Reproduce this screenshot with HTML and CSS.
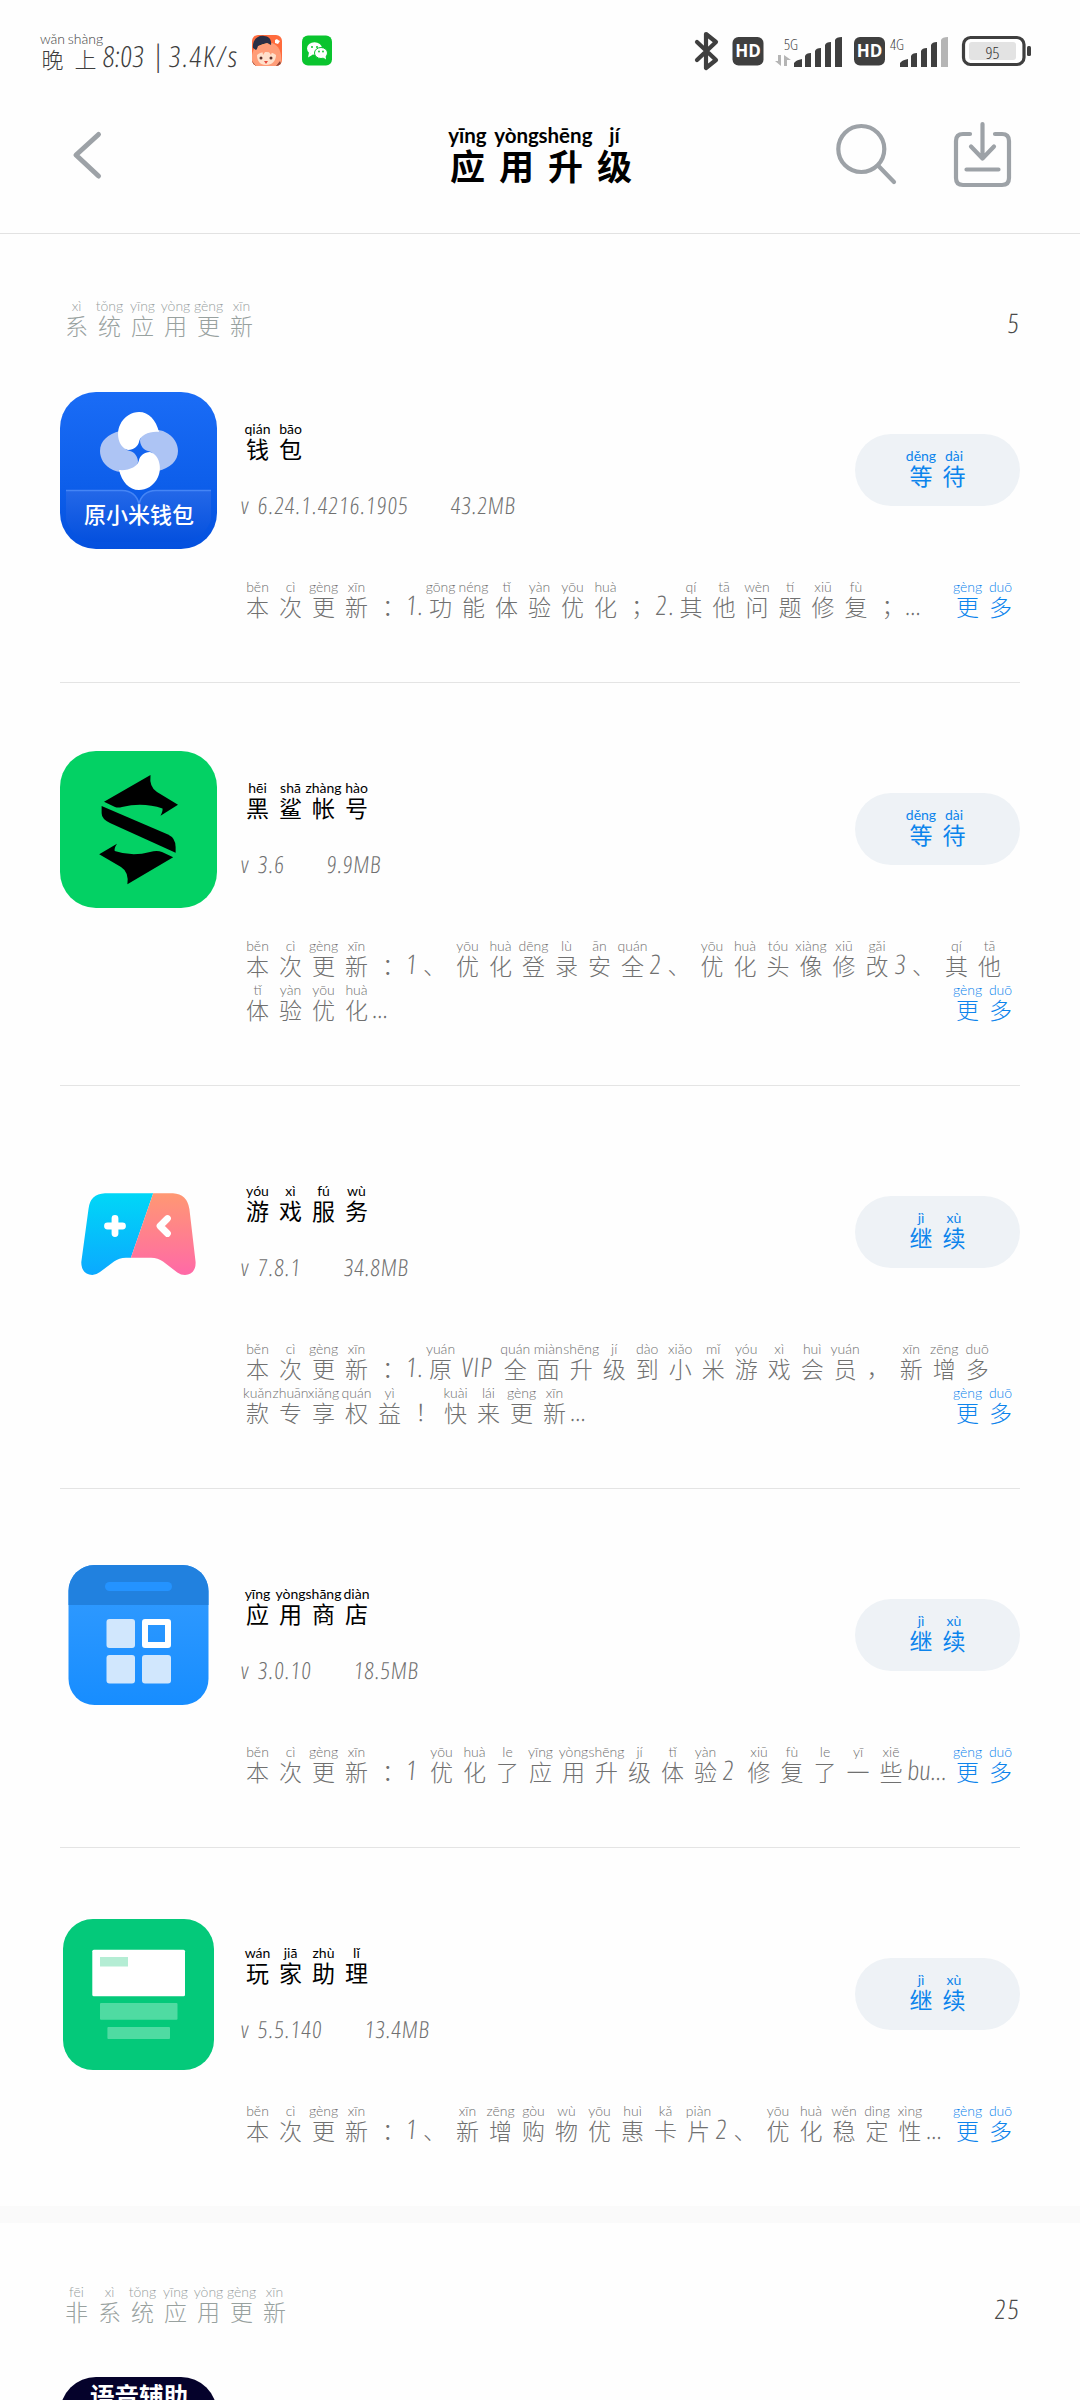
FILE: index.html
```html
<!DOCTYPE html>
<html lang="zh-CN">
<head>
<meta charset="utf-8">
<title>应用升级</title>
<link rel="stylesheet" href="styles.css">
</head>
<body>
<div class="status">
  <div class="clock"><ruby>晚<rt>wǎn</rt></ruby><ruby>上<rt>shàng</rt></ruby><span class="time">8:03</span><span class="bar">|</span><span class="speed">3.4K/s</span></div>
  <svg class="mini pet" viewBox="0 0 30 31">
    <defs><clipPath id="petclip"><rect width="30" height="31" rx="6"/></clipPath></defs>
    <g clip-path="url(#petclip)">
      <rect width="30" height="31" fill="#ff6b3d"/>
      <path d="M0 31V20C1 12 8 7 15 7s13 5 14 13l1 11z" fill="#ff9d78"/>
      <path d="M1 13C0 5 6 0 12 1c5 0 8 4 7 9-6-1-11 0-15 5z" fill="#2b2f45"/>
      <path d="M7 11c3-2 7-3 10-2l-1 2c-3-1-6 0-8 2z" fill="#ffb04a"/>
      <path d="M5 20c2-2 5-3 9-3s8 1 10 3c0 6-4 10-10 10S5 26 5 20z" fill="#ffe0cb"/>
      <path d="M3 20l7-7 1 7 4-6 4 6 2-6 5 7-1-8-10-5-9 3z" fill="#ff9d78"/>
      <circle cx="9" cy="23" r="1.5" fill="#5b2f2a"/><circle cx="19" cy="23" r="1.5" fill="#5b2f2a"/>
      <path d="M12 26h4l-2 3z" fill="#e64a3c"/>
      <path d="M23 5l2-1 1 1 2 1-2 3-3-1z" fill="#fff"/>
      <path d="M0 31v-5l4 5zM24 31l4-5 2 5z" fill="#8c4336"/>
    </g>
  </svg>
  <svg class="mini" viewBox="0 0 30 30">
    <rect width="30" height="30" rx="6" fill="#0ac42e"/>
    <ellipse cx="12.500" cy="13" rx="7.500" ry="6.200" fill="#fff"/><path d="M7 17l-1 5 5-3z" fill="#fff"/>
    <ellipse cx="19" cy="17.500" rx="6.500" ry="5.500" fill="#fff" stroke="#0ac42e"/><path d="M20 21l4 3-.5-4z" fill="#fff"/>
    <g fill="#0ac42e"><circle cx="10" cy="11.500" r="1"/><circle cx="15" cy="11.500" r="1"/><circle cx="17" cy="16" r=".9"/><circle cx="21" cy="16" r=".9"/></g>
  </svg>
  <svg class="signals" viewBox="690 30 345 42">
    <path d="M697 42l19 18-10 8V34l10 8-19 18" fill="none" stroke="#3f3f3f" stroke-width="4.200" stroke-linejoin="round" stroke-linecap="round"/>
    <g fill="#3f3f3f">
      <rect x="732.500" y="37" width="31" height="28.500" rx="6"/><rect x="854" y="37" width="31" height="28.500" rx="6"/>
      <path d="M794 67v-4q2-3 8-4v8zM805 67V56q1-3 6-3v14zM815 67V51q1-3 6-3v19zM825 67V45q1-3 6-3v25zM835 67V40q1-3 7-3v30z"/>
      <path d="M900 67v-4q2-3 8-4v8zM911 67V56q1-3 6-3v14zM921 67V51q1-3 6-3v19zM931 67V45q1-3 6-3v25z"/>
      <rect x="1027" y="46" width="4" height="10" rx="1.500"/>
    </g>
    <path d="M941 67V40q1-3 7-3v30z" fill="#b5b5b5"/>
    <path d="M781 55v11l-6-5h3v-6zM784 66V55l7 5h-4v6z" fill="#b5b5b5"/>
    <g class="hd"><text x="748" y="57">HD</text><text x="869.500" y="57">HD</text></g>
    <g class="net"><text x="784" y="49.500">5G</text><text x="890" y="49.500">4G</text></g>
    <rect x="963.500" y="37.500" width="60.500" height="27" rx="7" fill="#fff" stroke="#3f3f3f" stroke-width="3.200"/>
    <rect x="969" y="42" width="47" height="18" rx="3" fill="#e3e3e3"/>
    <text class="level" x="992.500" y="59">95</text>
  </svg>
</div>

<header class="bar-top">
  <svg class="back" viewBox="0 0 32 50"><path d="M27.500 4.500L5 25l22.500 21" /></svg>
  <h1><ruby>应<rt>yīng</rt></ruby><ruby>用<rt>yòng</rt></ruby><ruby>升<rt>shēng</rt></ruby><ruby>级<rt>jí</rt></ruby></h1>
  <div class="tools">
    <svg width="64" height="68" viewBox="834 121 64 68"><circle cx="861.300" cy="149" r="23"/><path d="M878.500 166L894 182"/></svg>
    <svg width="60" height="68" viewBox="952 121 60 68"><path d="M970 134h-7q-7 0-7 7v37q0 7 7 7h39q7 0 7-7v-37q0-7-7-7h-7M982.500 124v34M971 146.500l11.500 12 11.500-12M966.500 169.500h32"/></svg>
  </div>
</header>

<section class="group">
  <div class="group-head">
    <h2><ruby>系<rt>xì</rt></ruby><ruby>统<rt>tǒng</rt></ruby><ruby>应<rt>yīng</rt></ruby><ruby>用<rt>yòng</rt></ruby><ruby>更<rt>gèng</rt></ruby><ruby>新<rt>xīn</rt></ruby></h2>
    <span class="count">5</span>
  </div>

  <article class="app">
    <svg class="icon" viewBox="0 0 157 157">
      <defs>
        <linearGradient id="wallet" x2="0" y2="1"><stop stop-color="#1a6cf6"/><stop offset=".6" stop-color="#0d5eea"/><stop offset="1" stop-color="#0450de"/></linearGradient>
        <linearGradient id="flap" x2="0" y2="1"><stop stop-color="#2468e8"/><stop offset="1" stop-color="#0450de"/></linearGradient>
        <path id="petal" d="M68 58C58 55 56 41 60 33C64 24 72 20 79 20C89 20 96 28 99 40C90 39 80 43 79 50C78 54 74 58 68 58Z"/>
      </defs>
      <rect width="157" height="157" rx="36" fill="url(#wallet)"/>
      <path d="M6 98H62Q76 99 79 112Q82 99 96 98H151V128Q144 147 122 150H35Q13 147 6 128Z" fill="url(#flap)"/>
      <path d="M6 98.500H62Q76 99 79 112Q82 99 96 98.500H151" fill="none" stroke="#4585f5" stroke-width="1.500"/>
      <use href="#petal" transform="rotate(90 79 59)" fill="#adc4f4"/><use href="#petal" transform="rotate(-90 79 59)" fill="#adc4f4"/>
      <use href="#petal" fill="#fff"/><use href="#petal" transform="rotate(180 79 59)" fill="#fff"/>
      <text class="icon-text" x="79" y="131">原小米钱包</text>
    </svg>
    <div class="info">
      <h3><ruby>钱<rt>qián</rt></ruby><ruby>包<rt>bāo</rt></ruby></h3>
      <p class="meta"><span>v</span><span>6.24.1.4216.1905</span><span class="size">43.2MB</span></p>
    </div>
    <button><ruby>等<rt>děng</rt></ruby><ruby>待<rt>dài</rt></ruby></button>
    <div class="notes">
      <p><ruby>本<rt>běn</rt></ruby><ruby>次<rt>cì</rt></ruby><ruby>更<rt>gèng</rt></ruby><ruby>新<rt>xīn</rt></ruby><b class="mid">：</b><i class="one">1</i><i class="dot">.</i><ruby>功<rt>gōng</rt></ruby><ruby>能<rt>néng</rt></ruby><ruby>体<rt>tǐ</rt></ruby><ruby>验<rt>yàn</rt></ruby><ruby>优<rt>yōu</rt></ruby><ruby>化<rt>huà</rt></ruby><b class="mid">；</b><i>2</i><i class="dot">.</i><ruby>其<rt>qí</rt></ruby><ruby>他<rt>tā</rt></ruby><ruby>问<rt>wèn</rt></ruby><ruby>题<rt>tí</rt></ruby><ruby>修<rt>xiū</rt></ruby><ruby>复<rt>fù</rt></ruby><b class="mid">；</b><em>...</em></p>
      <a class="more"><ruby>更<rt>gèng</rt></ruby><ruby>多<rt>duō</rt></ruby></a>
    </div>
  </article>

  <article class="app">
    <svg class="icon" viewBox="0 0 157 157">
      <rect width="157" height="157" rx="36" fill="#03d164"/>
      <path d="M90.500 24L44 50.700L55 56Q58 57.200 62 56Q83 51 102.500 57.500Q103 60 100.500 64.700L118 53.700L97 41Q89 36 90.500 24Z"/>
      <path d="M41.600 55L108 83.500Q115.600 87 115.600 96V101.700L50 72Q41.600 68 41.600 62Z"/>
      <path d="M39.200 103.300L57 92.700Q54 97 54.700 100Q72 106 90 101Q97 99 102 101L113.200 106.300L67.400 133.300Q69 121 61 116Z"/>
    </svg>
    <div class="info">
      <h3><ruby>黑<rt>hēi</rt></ruby><ruby>鲨<rt>shā</rt></ruby><ruby>帐<rt>zhàng</rt></ruby><ruby>号<rt>hào</rt></ruby></h3>
      <p class="meta"><span>v</span><span>3.6</span><span class="size">9.9MB</span></p>
    </div>
    <button><ruby>等<rt>děng</rt></ruby><ruby>待<rt>dài</rt></ruby></button>
    <div class="notes">
      <p><ruby>本<rt>běn</rt></ruby><ruby>次<rt>cì</rt></ruby><ruby>更<rt>gèng</rt></ruby><ruby>新<rt>xīn</rt></ruby><b class="mid">：</b><i class="one">1</i><b>、</b><ruby>优<rt>yōu</rt></ruby><ruby>化<rt>huà</rt></ruby><ruby>登<rt>dēng</rt></ruby><ruby>录<rt>lù</rt></ruby><ruby>安<rt>ān</rt></ruby><ruby>全<rt>quán</rt></ruby><i>2</i><b>、</b><ruby>优<rt>yōu</rt></ruby><ruby>化<rt>huà</rt></ruby><ruby>头<rt>tóu</rt></ruby><ruby>像<rt>xiàng</rt></ruby><ruby>修<rt>xiū</rt></ruby><ruby>改<rt>gǎi</rt></ruby><i>3</i><b>、</b><ruby>其<rt>qí</rt></ruby><ruby>他<rt>tā</rt></ruby></p>
      <p><ruby>体<rt>tǐ</rt></ruby><ruby>验<rt>yàn</rt></ruby><ruby>优<rt>yōu</rt></ruby><ruby>化<rt>huà</rt></ruby><em>...</em></p>
      <a class="more"><ruby>更<rt>gèng</rt></ruby><ruby>多<rt>duō</rt></ruby></a>
    </div>
  </article>

  <article class="app">
    <svg class="icon" viewBox="0 0 157 157">
      <defs>
        <linearGradient id="cyan" x2="0" y2="1"><stop stop-color="#00d7f7"/><stop offset="1" stop-color="#0ba9ff"/></linearGradient>
        <linearGradient id="pink" x2="0" y2="1"><stop stop-color="#ff9873"/><stop offset="1" stop-color="#ff69a7"/></linearGradient>
      </defs>
      <path d="M93.200 39.300H45Q30 40 28.500 55L21.300 108Q21 120 32.300 121Q36 121 40 118L54 107.500Q59 103.700 66 103.700H70.900Z" fill="url(#cyan)"/>
      <path d="M93.200 39.300H113Q127 40 129.400 55L135.600 108Q136 120 125 121Q121 121 117.300 118.500L103 107.500Q98 103.700 91 103.700H70.900Z" fill="url(#pink)"/>
      <path d="M55 64.500v15M47.500 72h15M107.500 64.500L100 72l7.500 7.500" fill="none" stroke="#fff" stroke-width="6.800" stroke-linecap="round" stroke-linejoin="round"/>
    </svg>
    <div class="info">
      <h3><ruby>游<rt>yóu</rt></ruby><ruby>戏<rt>xì</rt></ruby><ruby>服<rt>fú</rt></ruby><ruby>务<rt>wù</rt></ruby></h3>
      <p class="meta"><span>v</span><span>7.8.1</span><span class="size">34.8MB</span></p>
    </div>
    <button><ruby>继<rt>jì</rt></ruby><ruby>续<rt>xù</rt></ruby></button>
    <div class="notes">
      <p><ruby>本<rt>běn</rt></ruby><ruby>次<rt>cì</rt></ruby><ruby>更<rt>gèng</rt></ruby><ruby>新<rt>xīn</rt></ruby><b class="mid">：</b><i class="one">1</i><i class="dot">.</i><ruby>原<rt>yuán</rt></ruby><i class="word">VIP</i><ruby>全<rt>quán</rt></ruby><ruby>面<rt>miàn</rt></ruby><ruby>升<rt>shēng</rt></ruby><ruby>级<rt>jí</rt></ruby><ruby>到<rt>dào</rt></ruby><ruby>小<rt>xiǎo</rt></ruby><ruby>米<rt>mǐ</rt></ruby><ruby>游<rt>yóu</rt></ruby><ruby>戏<rt>xì</rt></ruby><ruby>会<rt>huì</rt></ruby><ruby>员<rt>yuán</rt></ruby><b>，</b><ruby>新<rt>xīn</rt></ruby><ruby>增<rt>zēng</rt></ruby><ruby>多<rt>duō</rt></ruby></p>
      <p><ruby>款<rt>kuǎn</rt></ruby><ruby>专<rt>zhuān</rt></ruby><ruby>享<rt>xiǎng</rt></ruby><ruby>权<rt>quán</rt></ruby><ruby>益<rt>yì</rt></ruby><b class="mid">！</b><ruby>快<rt>kuài</rt></ruby><ruby>来<rt>lái</rt></ruby><ruby>更<rt>gèng</rt></ruby><ruby>新<rt>xīn</rt></ruby><em>...</em></p>
      <a class="more"><ruby>更<rt>gèng</rt></ruby><ruby>多<rt>duō</rt></ruby></a>
    </div>
  </article>

  <article class="app">
    <svg class="icon" viewBox="0 0 157 157">
      <defs>
        <linearGradient id="store" x2="0" y2="1"><stop offset=".25" stop-color="#2e99ff"/><stop offset="1" stop-color="#158cff"/></linearGradient>
        <clipPath id="storeclip"><rect x="8.500" y="8" width="140" height="140" rx="26"/></clipPath>
      </defs>
      <g clip-path="url(#storeclip)"><rect width="157" height="157" fill="url(#store)"/><rect width="157" height="48" fill="#2181df"/></g>
      <rect x="45" y="25" width="67" height="9" rx="4.500" fill="#2493ff"/>
      <g fill="#d1e7fd"><rect x="46.500" y="62" width="28.500" height="29" rx="3"/><rect x="46.500" y="98" width="28.500" height="28.500" rx="3"/><rect x="82" y="98" width="29" height="28.500" rx="3"/></g>
      <rect x="85" y="65" width="23" height="23" fill="none" stroke="#fff" stroke-width="6" stroke-linejoin="round"/>
    </svg>
    <div class="info">
      <h3><ruby>应<rt>yīng</rt></ruby><ruby>用<rt>yòng</rt></ruby><ruby>商<rt>shāng</rt></ruby><ruby>店<rt>diàn</rt></ruby></h3>
      <p class="meta"><span>v</span><span>3.0.10</span><span class="size">18.5MB</span></p>
    </div>
    <button><ruby>继<rt>jì</rt></ruby><ruby>续<rt>xù</rt></ruby></button>
    <div class="notes">
      <p><ruby>本<rt>běn</rt></ruby><ruby>次<rt>cì</rt></ruby><ruby>更<rt>gèng</rt></ruby><ruby>新<rt>xīn</rt></ruby><b class="mid">：</b><i class="one gap">1</i><ruby>优<rt>yōu</rt></ruby><ruby>化<rt>huà</rt></ruby><ruby>了<rt>le</rt></ruby><ruby>应<rt>yīng</rt></ruby><ruby>用<rt>yòng</rt></ruby><ruby>升<rt>shēng</rt></ruby><ruby>级<rt>jí</rt></ruby><ruby>体<rt>tǐ</rt></ruby><ruby>验<rt>yàn</rt></ruby><i class="gap">2</i><ruby>修<rt>xiū</rt></ruby><ruby>复<rt>fù</rt></ruby><ruby>了<rt>le</rt></ruby><ruby>一<rt>yī</rt></ruby><ruby>些<rt>xiē</rt></ruby><em>bu...</em></p>
      <a class="more"><ruby>更<rt>gèng</rt></ruby><ruby>多<rt>duō</rt></ruby></a>
    </div>
  </article>

  <article class="app">
    <svg class="icon" viewBox="0 0 157 157">
      <rect x="3" y="3" width="151" height="151" rx="30" fill="#04c97a"/>
      <rect x="32.300" y="33.700" width="92.700" height="46.500" rx="1.500" fill="#fff"/>
      <rect x="40" y="41" width="28" height="9.500" fill="#b4edd4"/>
      <g fill="#4fdba2"><rect x="40" y="87" width="77.500" height="16.800" rx="1"/><rect x="47.400" y="111" width="62.600" height="12" rx="1"/></g>
    </svg>
    <div class="info">
      <h3><ruby>玩<rt>wán</rt></ruby><ruby>家<rt>jiā</rt></ruby><ruby>助<rt>zhù</rt></ruby><ruby>理<rt>lǐ</rt></ruby></h3>
      <p class="meta"><span>v</span><span>5.5.140</span><span class="size">13.4MB</span></p>
    </div>
    <button><ruby>继<rt>jì</rt></ruby><ruby>续<rt>xù</rt></ruby></button>
    <div class="notes">
      <p><ruby>本<rt>běn</rt></ruby><ruby>次<rt>cì</rt></ruby><ruby>更<rt>gèng</rt></ruby><ruby>新<rt>xīn</rt></ruby><b class="mid">：</b><i class="one">1</i><b>、</b><ruby>新<rt>xīn</rt></ruby><ruby>增<rt>zēng</rt></ruby><ruby>购<rt>gòu</rt></ruby><ruby>物<rt>wù</rt></ruby><ruby>优<rt>yōu</rt></ruby><ruby>惠<rt>huì</rt></ruby><ruby>卡<rt>kǎ</rt></ruby><ruby>片<rt>piàn</rt></ruby><i>2</i><b>、</b><ruby>优<rt>yōu</rt></ruby><ruby>化<rt>huà</rt></ruby><ruby>稳<rt>wěn</rt></ruby><ruby>定<rt>dìng</rt></ruby><ruby>性<rt>xìng</rt></ruby><em>...</em></p>
      <a class="more"><ruby>更<rt>gèng</rt></ruby><ruby>多<rt>duō</rt></ruby></a>
    </div>
  </article>
</section>

<section class="group separated">
  <div class="group-head">
    <h2><ruby>非<rt>fēi</rt></ruby><ruby>系<rt>xì</rt></ruby><ruby>统<rt>tǒng</rt></ruby><ruby>应<rt>yīng</rt></ruby><ruby>用<rt>yòng</rt></ruby><ruby>更<rt>gèng</rt></ruby><ruby>新<rt>xīn</rt></ruby></h2>
    <span class="count">25</span>
  </div>
  <article class="app peek">
    <svg class="icon" viewBox="0 0 157 157">
      <rect width="157" height="157" rx="36" fill="#05022b"/>
      <text class="icon-text voice" x="79" y="28.500">语音辅助</text>
    </svg>
  </article>
</section>
</body>
</html>
```

FILE: styles.css
```css
* { box-sizing: border-box; margin: 0; padding: 0; }

body {
  width: 1080px;
  height: 2400px;
  overflow: hidden;
  background: #fefefe;
  color: #707070;
  font-family: "Open Sans", "Noto Sans CJK SC", sans-serif;
  font-weight: 300;
  font-stretch: 75%;
}

/* a character with its reading above */
ruby {
  display: flex;
  flex-direction: column-reverse;
  justify-content: flex-end;
  align-items: center;
  flex: none;
  width: 33px;
  height: 44px;
  font-family: "Noto Sans CJK SC", sans-serif;
  font-size: 23px;
  line-height: 22px;
}
rt {
  display: block;
  height: 17px;
  font-family: Lato, sans-serif;
  font-size: 14px;
  line-height: 18px;
  white-space: nowrap;
}

.status {
  display: flex;
  align-items: flex-start;
  height: 74px;
  padding: 28px 0 0 36px;
  color: #3d3d3d;
}
.clock { display: flex; width: 216px; font-size: 29px; line-height: 56px; white-space: nowrap; }
.clock ruby { height: 46px; font-size: 22px; }
.clock rt { height: 19px; line-height: 21px; }
.clock .time { width: 47px; margin-left: 1px; transform: skewX(-5deg); }
.clock .bar { width: 16px; text-align: center; line-height: 54px; }
.clock .speed { margin-left: 3px; letter-spacing: 1.6px; transform: skewX(-5deg); }
.mini { width: 30px; height: 31px; margin: 7px 20px 0 0; }
.signals { width: 345px; height: 42px; margin: 2px 0 0 338px; }
.hd { fill: #fff; font: 700 17px "Open Sans", sans-serif; text-anchor: middle; }
.net { fill: #444; font-size: 15px; }
.level { fill: #333; font-size: 17px; text-anchor: middle; }

.bar-top {
  display: flex;
  align-items: flex-start;
  height: 164px;
  margin-top: -4px;
  padding: 0 68px 0 71px;
  border-bottom: 1px solid #e2e2e2;
  color: #000;
}
.bar-top svg { fill: none; stroke: #9da2a7; stroke-width: 4.2; stroke-linecap: round; stroke-linejoin: round; }
.bar-top .back { width: 32px; height: 50px; margin-top: 60px; stroke-width: 5; }
h1 { display: flex; margin: 52px 0 0 340px; }
h1 ruby { width: 49px; height: 68px; font-size: 35px; font-weight: 700; line-height: 36px; }
h1 rt { height: 25px; font-size: 20.5px; font-weight: 700; line-height: 26px; }
.tools { display: flex; gap: 54px; margin: 51px 0 0 auto; }

.group { padding: 4px 60px 0; }
.separated { border-top: 17px solid #fafafa; padding-top: 0; }
.group-head { display: flex; justify-content: space-between; height: 86px; padding-top: 59px; color: #98a19f; }
.separated .group-head { padding-top: 60px; }
h2 { display: flex; font-weight: 300; }
.count { color: #4a4a4a; font-size: 27px; line-height: 52px; letter-spacing: 2px; margin-right: -2px; transform: skewX(-5deg); }

.app {
  display: grid;
  grid-template-columns: 157px 1fr 165px;
  column-gap: 24px;
  padding-top: 68px;
  border-bottom: 1px solid #e4e4e4;
}
.app:last-child { border-bottom: 0; }
.peek { height: 91px; overflow: hidden; }
.icon { display: block; width: 157px; height: 157px; }
.icon-text { fill: #fff; font: 500 22px "Noto Sans CJK SC", sans-serif; text-anchor: middle; }
.voice { font-weight: 700; font-size: 24.5px; }

.info { padding-top: 28px; }
h3 { display: flex; color: #000; font-weight: 400; }
.meta { display: flex; margin-top: 25px; font-size: 23.5px; line-height: 32px; letter-spacing: 1.1px; }
.meta span { transform: skewX(-5deg); }
.meta span:first-child { width: 17px; }
.meta .size { margin-left: 42px; letter-spacing: .9px; }

button {
  display: flex;
  justify-content: center;
  width: 165px;
  height: 72px;
  margin-top: 42px;
  padding-top: 13px;
  border: 0;
  border-radius: 36px;
  background: #eef2f6;
  color: #0c84ec;
}

.notes { grid-column: 2 / 4; position: relative; padding: 29px 0 60px; }
.notes p { display: flex; height: 44px; }
.notes b { width: 33px; padding-top: 16px; font: 300 23px/23px "Noto Sans CJK SC", sans-serif; text-align: center; }
.notes .mid { padding-left: 8px; }
.notes i, .notes em { width: 13.5px; font-style: normal; font-size: 27px; line-height: 53px; text-align: center; transform: skewX(-5deg); }
.notes .one { width: 12px; }
.notes .dot { width: 6px; }
.notes .word { width: 41.7px; letter-spacing: 1.5px; }
.notes .gap { margin-right: 7px; }
.notes em { width: auto; }
/* sits over the end of the last, truncated line */
.more { position: absolute; right: 3px; bottom: 60px; display: flex; color: #0c84ec; }
```
